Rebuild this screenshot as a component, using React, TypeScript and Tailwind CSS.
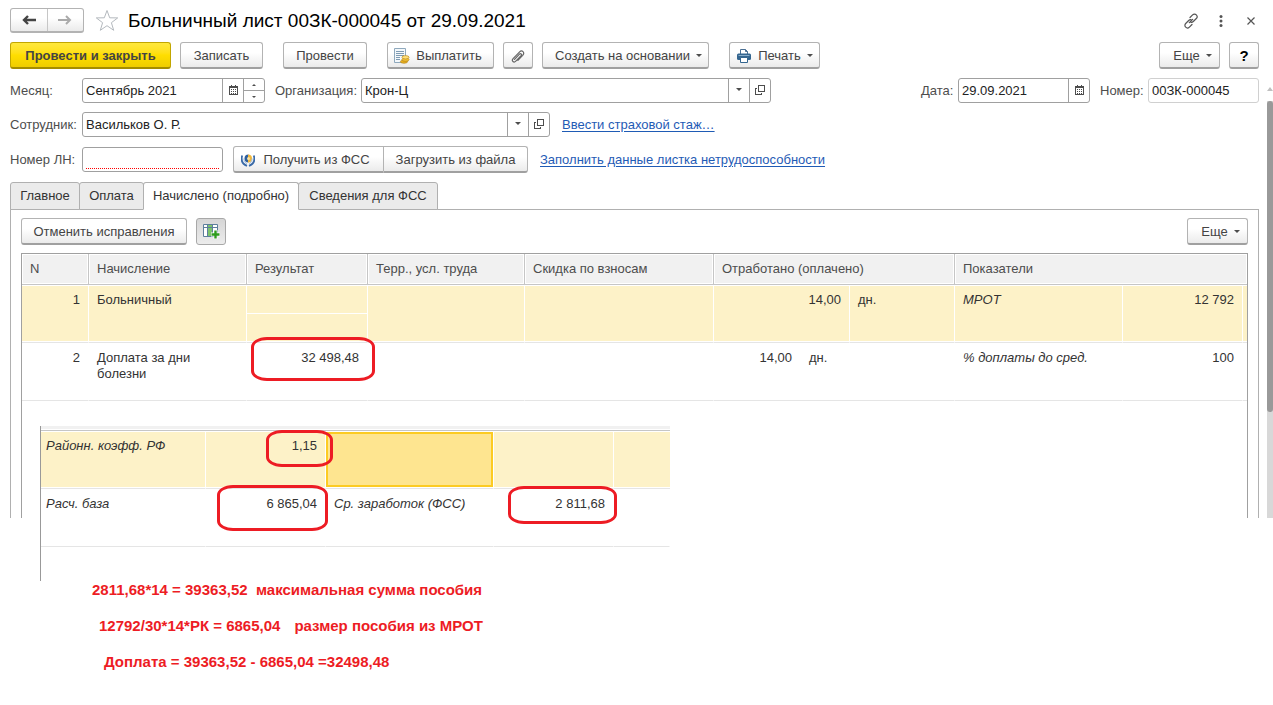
import { useState, type ReactNode } from "react";

const tabs = [
  { id: "main", title: "Главное", width: "w-[70px]" },
  { id: "pay", title: "Оплата", width: "w-[65px]" },
  { id: "accrued", title: "Начислено (подробно)", width: "w-[156px]" },
  { id: "fss", title: "Сведения для ФСС", width: "w-[140px]" },
];

const btn =
  "flex h-[27px] shrink-0 items-center justify-center rounded-[3px] border border-[#b3b3b3] border-b-2 border-b-[#a0a0a0] bg-linear-to-b from-white from-40% to-[#ebebeb] pt-px text-[#444] cursor-pointer";
const field = "flex h-[25px] shrink-0 overflow-hidden rounded-[3px] border border-[#a0a0a0] bg-white";
const fieldInput = "min-w-0 flex-1 bg-transparent px-[3px] text-[#222] outline-none";
const fieldBtn = "flex w-[21px] shrink-0 items-center justify-center border-l border-[#a0a0a0] pb-[2px] cursor-pointer";
const label = "shrink-0 text-[#4d4d4d]";
const link = "ml-3 text-[#1f5bb5] underline underline-offset-2";
const headCell =
  "h-[31px] border-b border-r border-[#c6c6c6] bg-[#f1f1f1] px-2 text-left font-normal text-[#4d4d4d] shadow-[inset_0_0_0_1px_#fff] last:border-r-0";
const rowOn =
  "h-[58px] border-b border-r border-r-white border-b-[#e5e5e5] bg-[#fdf2c8] px-2 pt-[7px] align-top shadow-[inset_0_1px_0_#fff,inset_0_-1px_0_#fff]";
const rowOff = "h-[58px] border-b border-b-[#e5e5e5] border-r border-r-white px-2 pt-[7px] align-top";

function Caret() {
  return (
    <svg width="6" height="3" viewBox="0 0 6 3" fill="#4d4d4d">
      <path d="M0 0h6L3 3z" />
    </svg>
  );
}

function CalendarIcon() {
  return (
    <svg width="9" height="10" viewBox="0 0 9 10" shapeRendering="crispEdges">
      <path d="M0 1h9v9H0z" fill="#4d4d4d" />
      <path d="M2 0h1v1H2zM6 0h1v1H6z" fill="#4d4d4d" />
      <path d="M1 3h7v6H1z" fill="#fff" />
      <path d="M2 4h1v1H2zM4 4h1v1H4zM6 4h1v1H6zM2 6h1v1H2zM4 6h1v1H4zM6 6h1v1H6zM2 8h1v1H2zM4 8h1v1H4zM6 8h1v1H6z" fill="#4d4d4d" />
    </svg>
  );
}

function OpenIcon() {
  return (
    <svg width="10" height="10" viewBox="0 0 10 10" fill="none" stroke="#4d4d4d" shapeRendering="crispEdges">
      <path d="M3.5 0.5h6v6h-6z" />
      <path d="M2 3.5H0.5v6h6V8" />
    </svg>
  );
}

function PayIcon() {
  return (
    <svg width="16" height="16" viewBox="0 0 16 16">
      <path d="M.5.5h11v14H.5z" fill="#f4f8fb" stroke="#8fa9bd" />
      <path d="M2 3.5h8M2 5.500h8M2 7.500h8M2 9.500h4M2 11.500h4" stroke="#7e9bb3" />
      <ellipse cx="10" cy="13.600" rx="3.600" ry="1.700" fill="#e8b020" stroke="#b07d10" strokeWidth=".6" />
      <ellipse cx="11.500" cy="11.600" rx="3.600" ry="1.700" fill="#f2c33a" stroke="#b07d10" strokeWidth=".6" />
      <ellipse cx="11.500" cy="9.300" rx="3.600" ry="1.700" fill="#ffe07a" stroke="#b07d10" strokeWidth=".6" />
    </svg>
  );
}

function ClipIcon() {
  return (
    <svg width="14" height="14" viewBox="0 0 14 14" fill="none" stroke="#666" strokeWidth="1.200" strokeLinecap="round">
      <path d="M4 9.700l5-5.200c1.200-1.200 2.700.2 1.600 1.500l-5.300 5.500c-2 2-4.700-.4-2.700-2.600l6.300-6.500c2.700-2.700 5.800.4 3.300 3.200l-4.800 5" transform="translate(-.5 .7)" />
    </svg>
  );
}

function PrintIcon() {
  return (
    <svg width="16" height="16" viewBox="0 0 16 16">
      <path d="M4.500 6V1.500h5l2 2V6" fill="#fff" stroke="#4a6f93" />
      <path d="M9.500 1.500v2h2" fill="none" stroke="#4a6f93" />
      <rect x="1" y="5.500" width="14" height="6.500" rx="1.500" fill="#33658f" />
      <path d="M2.500 7.500h11" stroke="#86abc9" />
      <path d="M4.500 9.500h7v5h-7z" fill="#fff" stroke="#33658f" />
    </svg>
  );
}

function FssIcon() {
  return (
    <svg width="14" height="14" viewBox="0 0 14 14">
      <path d="M7.500 1.500a4 4 0 0 0 0 8z" fill="#2f5f9e" />
      <path d="M7 1.500a4 4 0 0 1 0 8z" fill="#f0b73c" />
      <circle cx="7.500" cy="5.500" r="1.500" fill="#fbe3a0" />
      <path d="M1.200 2.500C-.2 7 1.500 11 6 12.800" fill="none" stroke="#3a6aa8" strokeWidth="1.800" />
      <path d="M12.800 2.500c1.400 4.500-.3 8.500-4.800 10.300" fill="none" stroke="#3a6aa8" strokeWidth="1.800" />
      <path d="M2.900 5.500c0 2.500 1 4 3 5.200M11.100 5.500c0 2.500-1 4-3 5.200" fill="none" stroke="#9dbbdc" />
    </svg>
  );
}

function AddColumnIcon() {
  return (
    <svg width="17" height="15" viewBox="0 0 17 15">
      <path d="M.5.500h14v12H.5z" fill="#fff" stroke="#5d7f9c" />
      <path d="M5 1h4v11H5z" fill="#7cc46a" />
      <path d="M1 3.500h13M4.500 1v11M9.500 1v11" stroke="#5d7f9c" />
      <path d="M12.500 6v9M8 10.500h9" stroke="#fff" strokeWidth="4" />
      <path d="M12.500 6.500v8M8.500 10.500h8" stroke="#2e9b1e" strokeWidth="2.400" />
    </svg>
  );
}

function MoreButton() {
  return (
    <button className={`${btn} w-[61px] gap-[6px] pl-[6px]`}>
      Еще
      <Caret />
    </button>
  );
}

function Mark({ className }: { className: string }) {
  return <div className={`pointer-events-none absolute rounded-[16px/10px] border-[3px] border-[#ed1c24] ${className}`} />;
}

function Group({ children }: { children: ReactNode }) {
  return <div className="flex items-center">{children}</div>;
}

export default function App() {
  const [tab, setTab] = useState("accrued");

  return (
    <div className="relative bg-white pb-9 font-['Liberation_Sans',Arial,sans-serif] text-[13px] leading-4 text-[#333]">
      <div className="flex">
        <main className="flex min-w-0 flex-1 flex-col gap-[9px] pl-[10px] pr-2 pt-2">
          {/* title */}
          <header className="flex h-[25px] items-center">
            <div className="flex h-[25px] w-[74px] rounded-[3px] border border-b-2 border-[#b3b3b3] bg-linear-to-b from-white from-40% to-[#ebebeb]">
              <button aria-label="Назад" className="flex flex-1 items-center justify-center border-r border-[#c6c6c6]">
                <svg width="14" height="10" viewBox="0 0 14 10" fill="none" stroke="#444" strokeWidth="2.400">
                  <path d="M14 5H2M6 1L2 5l4 4" />
                </svg>
              </button>
              <button aria-label="Вперед" className="flex flex-1 items-center justify-center">
                <svg width="14" height="10" viewBox="0 0 14 10" fill="none" stroke="#aaa" strokeWidth="2">
                  <path d="M0 5h12M8 1l4 4-4 4" />
                </svg>
              </button>
            </div>
            <button aria-label="В избранное" className="ml-[11px]">
              <svg width="24" height="23" viewBox="0 0 24 23" fill="#fff" stroke="#b4b9be">
                <path d="M12 1.500l2.700 7.300 8 .1-6.300 4.800 2.300 7.600L12 16.700l-6.700 4.600 2.300-7.600L1.300 8.900l8-.1z" />
              </svg>
            </button>
            <h1 className="ml-[9px] text-[19px] leading-6 text-black">Больничный лист 00ЗК-000045 от 29.09.2021</h1>
            <div className="ml-auto flex items-center">
              <button aria-label="Ссылка">
                <svg width="16" height="16" viewBox="0 0 16 16" fill="none" stroke="#555" strokeWidth="1.200" strokeLinecap="round">
                  <path d="M7 4.500l2.600-2.600c1.200-1.200 2.800-1 3.700-.1s1.200 2.500 0 3.700l-3 3c-.7.700-1.500.9-2.300.8M9 11.500l-2.600 2.600c-1.200 1.200-2.800 1-3.700.1s-1.200-2.500 0-3.700l3-3c.7-.7 1.500-.9 2.300-.8M6.300 9.700l3.400-3.400" />
                </svg>
              </button>
              <button aria-label="Меню" className="ml-5">
                <svg width="4" height="12" viewBox="0 0 4 12" fill="#555">
                  <circle cx="2" cy="1.500" r="1.500" />
                  <circle cx="2" cy="6" r="1.500" />
                  <circle cx="2" cy="10.500" r="1.500" />
                </svg>
              </button>
              <button aria-label="Закрыть" className="ml-6 mr-1">
                <svg width="8" height="8" viewBox="0 0 8 8" stroke="#555" strokeWidth="1.200">
                  <path d="M.5.500l7 7M7.500.500l-7 7" />
                </svg>
              </button>
            </div>
          </header>

          {/* command bar */}
          <div className="flex gap-[9px]">
            <button className="flex h-[27px] w-[161px] shrink-0 cursor-pointer items-center justify-center rounded-[3px] border border-b-2 border-[#c2a600] border-b-[#a58d00] bg-linear-to-b from-[#ffe83c] via-[#ffde00] to-[#efcd00] pt-px font-bold text-[#444]">
              Провести и закрыть
            </button>
            <button className={`${btn} w-[83px]`}>Записать</button>
            <button className={`${btn} ml-[11px] w-[84px]`}>Провести</button>
            <button className={`${btn} ml-[11px] w-[107px] gap-[6px] pr-[5px]`}>
              <PayIcon />
              Выплатить
            </button>
            <button aria-label="Файлы" className={`${btn} w-[30px]`}>
              <ClipIcon />
            </button>
            <button className={`${btn} w-[167px] gap-[6px] pl-[6px]`}>
              Создать на основании
              <Caret />
            </button>
            <button className={`${btn} ml-[11px] w-[91px] gap-[6px]`}>
              <PrintIcon />
              Печать
              <Caret />
            </button>
            <div className="ml-auto flex gap-[9px]">
              <MoreButton />
              <button className={`${btn} w-[30px] text-[15px] font-bold text-black`}>?</button>
            </div>
          </div>

          {/* month, organization, date, number */}
          <div className="flex items-center">
            <label htmlFor="month" className={`${label} w-[72px]`}>Месяц:</label>
            <div className={`${field} w-[183px]`}>
              <input id="month" className={fieldInput} defaultValue="Сентябрь 2021" />
              <button aria-label="Выбрать месяц" className={fieldBtn}>
                <CalendarIcon />
              </button>
              <div className="flex w-[21px] flex-col border-l border-[#a0a0a0]">
                <button aria-label="Следующий месяц" className="flex flex-1 items-center justify-center border-b border-[#a0a0a0]">
                  <svg width="4" height="2" viewBox="0 0 4 2" fill="#4d4d4d"><path d="M0 2h4L2 0z" /></svg>
                </button>
                <button aria-label="Предыдущий месяц" className="flex flex-1 items-center justify-center">
                  <svg width="4" height="2" viewBox="0 0 4 2" fill="#4d4d4d"><path d="M0 0h4L2 2z" /></svg>
                </button>
              </div>
            </div>
            <label htmlFor="org" className={`${label} ml-[10px] w-[86px]`}>Организация:</label>
            <div className={`${field} w-[410px]`}>
              <input id="org" className={fieldInput} defaultValue="Крон-Ц" />
              <button aria-label="Выбрать организацию" className={fieldBtn}><Caret /></button>
              <button aria-label="Открыть организацию" className={fieldBtn}><OpenIcon /></button>
            </div>
            <div className="ml-auto flex items-center">
              <label htmlFor="date" className={`${label} w-[37px]`}>Дата:</label>
              <div className={`${field} w-[132px]`}>
                <input id="date" className={fieldInput} defaultValue="29.09.2021" />
                <button aria-label="Выбрать дату" className={fieldBtn}>
                  <CalendarIcon />
                </button>
              </div>
              <label htmlFor="num" className={`${label} ml-[10px] w-12`}>Номер:</label>
              <input id="num" readOnly className="h-[25px] w-[111px] rounded-[3px] border border-[#d0d0d0] px-[3px] text-[#222] outline-none" defaultValue="00ЗК-000045" />
            </div>
          </div>

          {/* employee */}
          <Group>
            <label htmlFor="emp" className={`${label} w-[72px]`}>Сотрудник:</label>
            <div className={`${field} w-[468px]`}>
              <input id="emp" className={fieldInput} defaultValue="Васильков О. Р." />
              <button aria-label="Выбрать сотрудника" className={fieldBtn}><Caret /></button>
              <button aria-label="Открыть сотрудника" className={fieldBtn}><OpenIcon /></button>
            </div>
            <a href="#experience" className={link}>Ввести страховой стаж…</a>
          </Group>

          {/* sick leave number */}
          <Group>
            <label htmlFor="ln" className={`${label} w-[72px]`}>Номер ЛН:</label>
            <div className={`${field} w-[141px] px-[3px] pb-[2px]`}>
              <input id="ln" className="min-w-0 flex-1 border-b border-dotted border-[#f00] outline-none" />
            </div>
            <button className={`${btn} ml-[10px] w-[151px] gap-2 rounded-r-none pr-[6px]`}>
              <FssIcon />
              Получить из ФСС
            </button>
            <button className={`${btn} w-[144px] rounded-l-none border-l-0`}>Загрузить из файла</button>
            <a href="#fill" className={link}>Заполнить данные листка нетрудоспособности</a>
          </Group>

          <section>
            <div role="tablist" className="flex">
              {tabs.map((t) => (
                <button
                  key={t.id}
                  role="tab"
                  aria-selected={tab === t.id}
                  onClick={() => setTab(t.id)}
                  className={`-mr-px h-7 rounded-t-[3px] border border-[#b0b0b0] text-[#333] ${t.width} ${
                    tab === t.id ? "relative z-10 border-b-white bg-white" : "bg-[#ebebeb]"
                  }`}
                >
                  {t.title}
                </button>
              ))}
            </div>

            <div className="-mt-px border border-b-0 border-[#b0b0b0] px-[10px] pt-2">
              <div className="flex gap-[9px]">
                <button className={`${btn} w-[166px]`}>Отменить исправления</button>
                <button aria-label="Добавить колонку" className="flex h-[27px] w-[30px] items-center justify-center rounded-[3px] border border-[#a8a8a8] bg-linear-to-b from-[#d6d6d6] to-[#ececec]">
                  <AddColumnIcon />
                </button>
                <div className="ml-auto">
                  <MoreButton />
                </div>
              </div>

              <div className="relative mt-2 min-h-[265px] border border-b-0 border-[#a0a0a0]">
                <table className="w-full table-fixed border-separate border-spacing-0">
                  <colgroup>
                    <col className="w-[67px]" />
                    <col className="w-[158px]" />
                    <col className="w-[121px]" />
                    <col className="w-[157px]" />
                    <col className="w-[189px]" />
                    <col className="w-[136px]" />
                    <col className="w-[105px]" />
                    <col className="w-[168px]" />
                    <col />
                    <col className="w-[4px]" />
                  </colgroup>
                  <thead>
                    <tr>
                      <th className={headCell}>N</th>
                      <th className={headCell}>Начисление</th>
                      <th className={headCell}>Результат</th>
                      <th className={headCell}>Терр., усл. труда</th>
                      <th className={headCell}>Скидка по взносам</th>
                      <th className={headCell} colSpan={2}>Отработано (оплачено)</th>
                      <th className={headCell} colSpan={3}>Показатели</th>
                    </tr>
                  </thead>
                  <tbody>
                    <tr>
                      <td className={`${rowOn} text-right`}>1</td>
                      <td className={rowOn}>Больничный</td>
                      <td className="h-[58px] border-b border-r border-r-white border-b-[#e5e5e5] bg-[#fdf2c8] p-0 align-top shadow-[inset_0_1px_0_#fff,inset_0_-1px_0_#fff]">
                        <div className="h-[29px] border-b border-white" />
                      </td>
                      <td className={rowOn} />
                      <td className={rowOn} />
                      <td className={`${rowOn} text-right`}>14,00</td>
                      <td className={rowOn}>дн.</td>
                      <td className={`${rowOn} italic`}>МРОТ</td>
                      <td className={`${rowOn} text-right`}>12 792</td>
                      <td className="border-b border-b-[#e5e5e5] bg-[#fdf2c8] p-0 shadow-[inset_0_1px_0_#fff,inset_0_-1px_0_#fff]" />
                    </tr>
                    <tr>
                      <td className={`${rowOff} text-right`}>2</td>
                      <td className={rowOff}>Доплата за дни болезни</td>
                      <td className={`${rowOff} text-right`}>32 498,48</td>
                      <td className={rowOff} />
                      <td className={rowOff} />
                      <td className={rowOff} colSpan={2}>
                        <div className="flex gap-[17px]">
                          <span className="w-[70px] text-right">14,00</span>
                          <span>дн.</span>
                        </div>
                      </td>
                      <td className={`${rowOff} italic`}>% доплаты до сред.</td>
                      <td className={`${rowOff} text-right`}>100</td>
                      <td className="border-b border-b-[#e5e5e5] p-0" />
                    </tr>
                  </tbody>
                </table>
                <Mark className="left-[229px] top-[83px] h-[44px] w-[124px]" />
              </div>
            </div>
          </section>
        </main>

        {/* scrollbar */}
        <div className="flex w-[6px] shrink-0 flex-col pt-[87px]">
          <svg width="6" height="4" viewBox="0 0 6 4" fill="#c0c0c0"><path d="M0 4h6L3 0z" /></svg>
          <div className="mt-[10px] flex-1 bg-[#d8d8d8]">
            <div className="h-[311px] rounded-[3px] bg-[#999]" />
          </div>
        </div>
      </div>

      {/* rest of the indicators, laid over the list */}
      <div className="absolute left-10 top-[426px] h-[155px] w-[630px] border-l border-[#999] bg-white">
        <div className="h-[5px] border-b border-[#c6c6c6] bg-[#f1f1f1] shadow-[inset_0_-1px_0_#fff]" />
        <table className="w-full table-fixed border-separate border-spacing-0">
          <colgroup>
            <col className="w-[165px]" />
            <col className="w-[120px]" />
            <col className="w-[168px]" />
            <col className="w-[120px]" />
            <col />
          </colgroup>
          <tbody>
            <tr>
              <td className={`${rowOn} pl-[5px] italic`}>Районн. коэфф. РФ</td>
              <td className={`${rowOn} text-right`}>1,15</td>
              <td className="border-b border-r border-b-[#e5e5e5] border-r-white p-0 pb-px pt-px">
                <div className="h-[55px] border-2 border-[#fccb23] bg-[#fee590]" />
              </td>
              <td className={rowOn} />
              <td className={`${rowOn} border-r-0`} />
            </tr>
            <tr>
              <td className={`${rowOff} pl-[5px] italic`}>Расч. база</td>
              <td className={`${rowOff} text-right`}>6 865,04</td>
              <td className={`${rowOff} italic`}>Ср. заработок (ФСС)</td>
              <td className={`${rowOff} text-right`}>2 811,68</td>
              <td className={rowOff} />
            </tr>
          </tbody>
        </table>
        <Mark className="left-[225px] top-[4px] h-[37px] w-[67px]" />
        <Mark className="left-[176px] top-[59px] h-[46px] w-[111px]" />
        <Mark className="left-[467px] top-[60px] h-[38px] w-[109px]" />
      </div>

      {/* notes */}
      <div className="mt-[63px] flex flex-col gap-[18px] pl-[92px] text-[15px] leading-[18px] font-bold text-[#ed1c24]">
        <p className="whitespace-pre">2811,68*14 = 39363,52  максимальная сумма пособия</p>
        <p className="flex gap-[14px] pl-[7px]">
          <span>12792/30*14*РК = 6865,04</span>
          <span>размер пособия из МРОТ</span>
        </p>
        <p className="pl-3">Доплата = 39363,52 - 6865,04 =32498,48</p>
      </div>
    </div>
  );
}
